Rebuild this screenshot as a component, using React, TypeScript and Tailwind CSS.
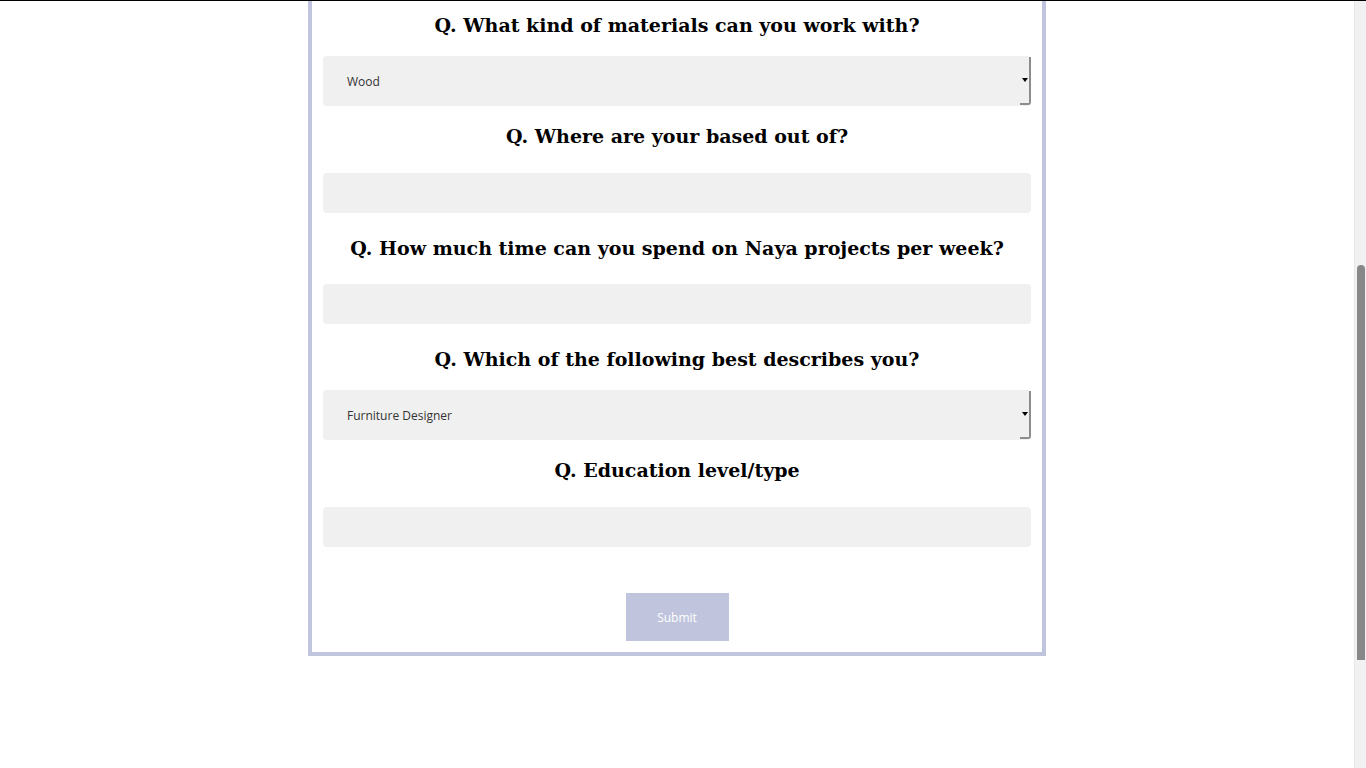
import React from "react";

const heading = "h-[31px] flex items-center justify-center text-[19px] font-bold text-black";
const headingFont = { fontFamily: '"DejaVu Serif", serif' } as React.CSSProperties;

function Heading({ children }: { children: React.ReactNode }) {
  return (
    <div className={heading} style={headingFont}>
      {children}
    </div>
  );
}

function SelectBox({ value }: { value: string }) {
  return (
    <div className="h-[50px] w-full rounded-[4px] bg-[#f0f0f0] flex items-center relative">
      <span className="pl-[24px] pt-[2px] text-[12px] text-[#333] font-['Open_Sans',sans-serif]">{value}</span>
      <div className="absolute right-0 top-[1px] bottom-[1px] w-[11px] border-r-2 border-b-2 border-[#8c8c8c] rounded-br-[3px] flex items-center justify-center">
        <div className="w-0 h-0 border-l-[3px] border-r-[3px] border-t-[4px] border-l-transparent border-r-transparent border-t-black" />
      </div>
    </div>
  );
}

function TextInput({ top }: { top: "a" | "b" }) {
  return (
    <div className={top === "a" ? "pt-[6px] pb-[5px]" : "pt-[5px] pb-[5px]"}>
      <div className="h-[40px] w-full rounded-[4px] bg-[#f0f0f0]" />
    </div>
  );
}

export default function App() {
  return (
    <div className="w-[1366px] h-[768px] overflow-hidden bg-white flex flex-col font-['Open_Sans',sans-serif]">
      <div className="h-[1px] bg-black w-full" />
      <div className="flex flex-1 min-h-0">
        <div className="flex-1 min-w-0">
          <div className="w-[738px] mx-auto border-l-4 border-r-4 border-b-4 border-[#c0c5dd] px-[11px] pt-[9px] pb-[11px] flex flex-col">
            <div className="flex flex-col gap-[15px]">
              <Heading>Q. What kind of materials can you work with?</Heading>
              <SelectBox value="Wood" />
              <Heading>Q. Where are your based out of?</Heading>
              <TextInput top="a" />
              <Heading>Q. How much time can you spend on Naya projects per week?</Heading>
              <TextInput top="b" />
              <Heading>Q. Which of the following best describes you?</Heading>
              <SelectBox value="Furniture Designer" />
              <Heading>Q. Education level/type</Heading>
              <TextInput top="a" />
            </div>
            <div className="flex justify-center mt-[41px]">
              <button className="w-[103px] h-[48px] bg-[#c0c5dd] text-white text-[12px] pt-[1px] font-['Open_Sans',sans-serif]">
                Submit
              </button>
            </div>
          </div>
        </div>
        <div className="w-[12px] bg-[#f1f1f1] border-l border-[#e8e8e8] flex flex-col">
          <div className="h-[264px]" />
          <div className="mx-auto w-[8px] h-[395px] bg-[#888] rounded-t-[4px]" />
        </div>
      </div>
    </div>
  );
}
